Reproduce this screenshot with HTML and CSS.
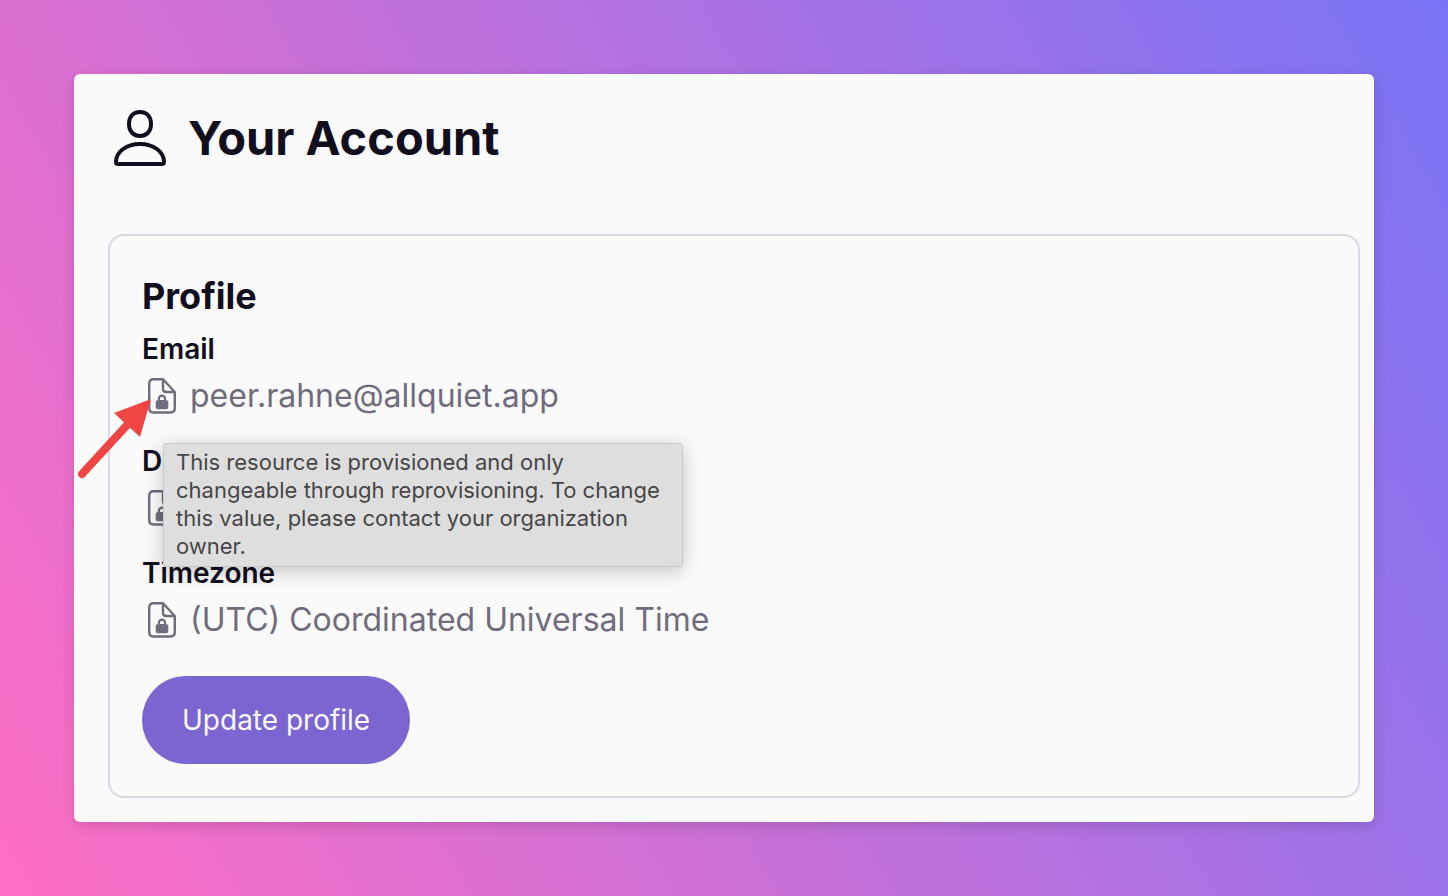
FILE: index.html
```html
<!DOCTYPE html>
<html lang="en">
<head>
<meta charset="utf-8">
<meta name="viewport" content="width=device-width, initial-scale=1">
<title>Your Account</title>
<link rel="stylesheet" href="styles.css">
</head>
<body>
<svg class="sprite" aria-hidden="true">
  <symbol id="file-lock" viewBox="0 0 40 40">
    <path d="M21 3.300H11.500Q7.200 3.300 7.200 7.500V32.300Q7.200 36.500 11.500 36.500H28.500Q32.800 36.500 32.800 32.300V16Z M21 3.300V13Q21 16 24 16H32.800" fill="none" stroke="currentColor" stroke-width="2.400" stroke-linejoin="round"/>
    <path d="M16.900 25V22.800a3.100 3.100 0 0 1 6.200 0V25" fill="none" stroke="currentColor" stroke-width="2.200"/>
    <rect x="13.700" y="24" width="12.600" height="9.300" rx="2.500" fill="currentColor"/>
  </symbol>
</svg>
<main class="card">
  <header class="page-header">
    <svg class="user-icon" viewBox="0 0 64 64" aria-hidden="true">
      <path d="M32 6C39 6 43 11 43 18C43 26 38 30 32 30S21 26 21 18C21 11 25 6 32 6Z"/>
      <path d="M8 56C8 46 18 38 32 38S56 46 56 56Q56 58 54 58H10Q8 58 8 56Z"/>
    </svg>
    <h1 class="page-title">Your Account</h1>
  </header>
  <section class="panel">
    <h2 class="panel-title">Profile</h2>
    <dl class="fields">
      <div class="field">
        <dt class="label">Email</dt>
        <dd class="value">
          <span class="lock">
            <svg class="lock-icon" aria-hidden="true"><use href="#file-lock"/></svg>
            <svg class="arrow" viewBox="0 0 76 82" aria-hidden="true">
              <path class="arrow-line" d="M6 76L52 26"/>
              <path class="arrow-head" d="M75 1L38 15L64 39Z"/>
            </svg>
            <span class="tooltip" role="tooltip">This resource is provisioned and only changeable through reprovisioning. To change this value, please contact your organization owner.</span>
          </span>
          <span>peer.rahne@allquiet.app</span>
        </dd>
      </div>
      <div class="field">
        <dt class="label">D</dt>
        <dd class="value"><svg class="lock-icon" aria-hidden="true"><use href="#file-lock"/></svg></dd>
      </div>
      <div class="field">
        <dt class="label">Timezone</dt>
        <dd class="value"><svg class="lock-icon" aria-hidden="true"><use href="#file-lock"/></svg><span>(UTC) Coordinated Universal Time</span></dd>
      </div>
    </dl>
    <button class="button" type="button">Update profile</button>
  </section>
</main>
</body>
</html>
```
FILE: styles.css
```css
* { box-sizing: border-box; }

body {
  margin: 0;
  min-height: 100vh;
  padding: 74px;
  background: linear-gradient(60deg, #ff6ec4, #7873f5);
  font-family: Inter, "Liberation Sans", sans-serif;
  color: #110e1e;
}

.sprite { position: absolute; width: 0; height: 0; }

.card {
  padding: 32px 14px 24px 34px;
  background: #fafafa;
  border-radius: 6px;
  box-shadow: 0 4px 14px rgba(0, 0, 0, 0.15);
}

.page-header {
  display: flex;
  align-items: center;
  gap: 16px;
  margin-bottom: 64px;
}

.user-icon {
  width: 64px;
  height: 64px;
  fill: none;
  stroke: currentColor;
  stroke-width: 4;
}

.page-title {
  margin: 0;
  font-size: 47px;
  line-height: 64px;
  font-weight: 700;
}

.panel {
  padding: 36px 32px 32px;
  border: 2px solid #d9d8e3;
  border-radius: 16px;
}

.panel-title {
  margin: 0 0 8px;
  font-size: 36px;
  line-height: 48px;
  font-weight: 700;
}

.fields {
  display: grid;
  gap: 20px;
  margin: 0 0 32px;
}

.field { display: grid; gap: 2px; }

.label {
  font-size: 28px;
  line-height: 42px;
  font-weight: 600;
}

.value {
  display: flex;
  align-items: center;
  gap: 8px;
  height: 48px;
  margin: 0;
  font-size: 32px;
  line-height: 48px;
  color: #706c7b;
}

.lock { position: relative; display: flex; }

.lock-icon { width: 40px; height: 40px; }

.arrow {
  position: absolute;
  z-index: 2;
  top: 22px;
  right: 30px;
  width: 76px;
  height: 82px;
}

.arrow-line { stroke: #f04545; stroke-width: 8; stroke-linecap: round; }
.arrow-head { fill: #f04545; }

.tooltip {
  position: absolute;
  z-index: 1;
  top: 67px;
  left: 21px;
  width: 520px;
  padding: 4px 12px 6px;
  border: 1px solid #c8c8c8;
  border-radius: 3px;
  background: #dedede;
  box-shadow: 0 4px 20px rgba(0, 0, 0, 0.22);
  font-size: 22px;
  line-height: 28px;
  color: #464646;
}

.button {
  height: 88px;
  padding: 0 40px;
  border: 0;
  border-radius: 44px;
  background: #7b66d1;
  color: #fafafa;
  font: inherit;
  font-size: 28px;
}
```
